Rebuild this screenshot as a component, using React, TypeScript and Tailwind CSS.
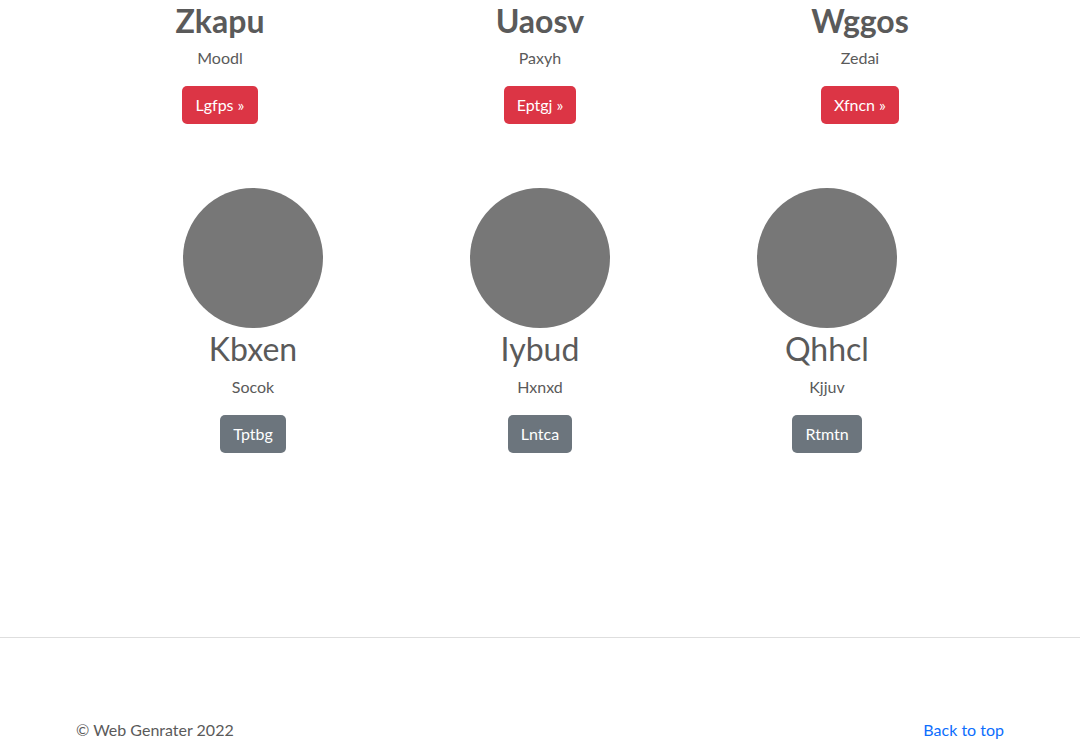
export default function App() {
  const top = [
    { title: "Zkapu", sub: "Moodl", btn: "Lgfps »" },
    { title: "Uaosv", sub: "Paxyh", btn: "Eptgj »" },
    { title: "Wggos", sub: "Zedai", btn: "Xfncn »" },
  ];
  const team = [
    { title: "Kbxen", sub: "Socok", btn: "Tptbg" },
    { title: "Iybud", sub: "Hxnxd", btn: "Lntca" },
    { title: "Qhhcl", sub: "Kjjuv", btn: "Rtmtn" },
  ];

  return (
    <div
      className="min-h-screen bg-white text-[#5a5a5a]"
      style={{ fontFamily: "Lato, 'Open Sans', sans-serif" }}
    >
      {/* Marketing row */}
      <div className="mx-auto grid w-[960px] grid-cols-3">
        {top.map((item) => (
          <div key={item.title} className="mb-6 text-center">
            <h2 className="mb-[6px] pt-[2px] text-[32px] font-bold leading-[1.2]">{item.title}</h2>
            <p className="mb-4 text-base leading-6">{item.sub}</p>
            <button className="h-[38px] rounded-[5px] bg-[#dc3545] px-[13px] text-base leading-6 text-white">
              {item.btn}
            </button>
          </div>
        ))}
      </div>

      {/* Team row */}
      <div className="mx-auto mt-10 grid w-[861px] grid-cols-3">
        {team.map((item) => (
          <div key={item.title} className="mb-6 flex flex-col items-center text-center">
            <div className="h-[140px] w-[140px] rounded-full bg-[#777777]"></div>
            <h2 className="mb-[6px] pt-[2px] text-[32px] font-normal leading-[1.2]">{item.title}</h2>
            <p className="mb-4 text-base leading-6">{item.sub}</p>
            <button className="h-[38px] rounded-[5px] bg-[#6c757d] px-[13px] text-base leading-6 text-white">
              {item.btn}
            </button>
          </div>
        ))}
      </div>

      <hr className="mt-[160px] mb-20 h-px border-0 bg-[#dedede]" />

      {/* Footer */}
      <footer className="mx-auto flex w-[960px] justify-between px-4 pb-12 text-base leading-6">
        <p>© Web Genrater 2022</p>
        <a href="#" className="text-[#0d6efd]">
          Back to top
        </a>
      </footer>
    </div>
  );
}
